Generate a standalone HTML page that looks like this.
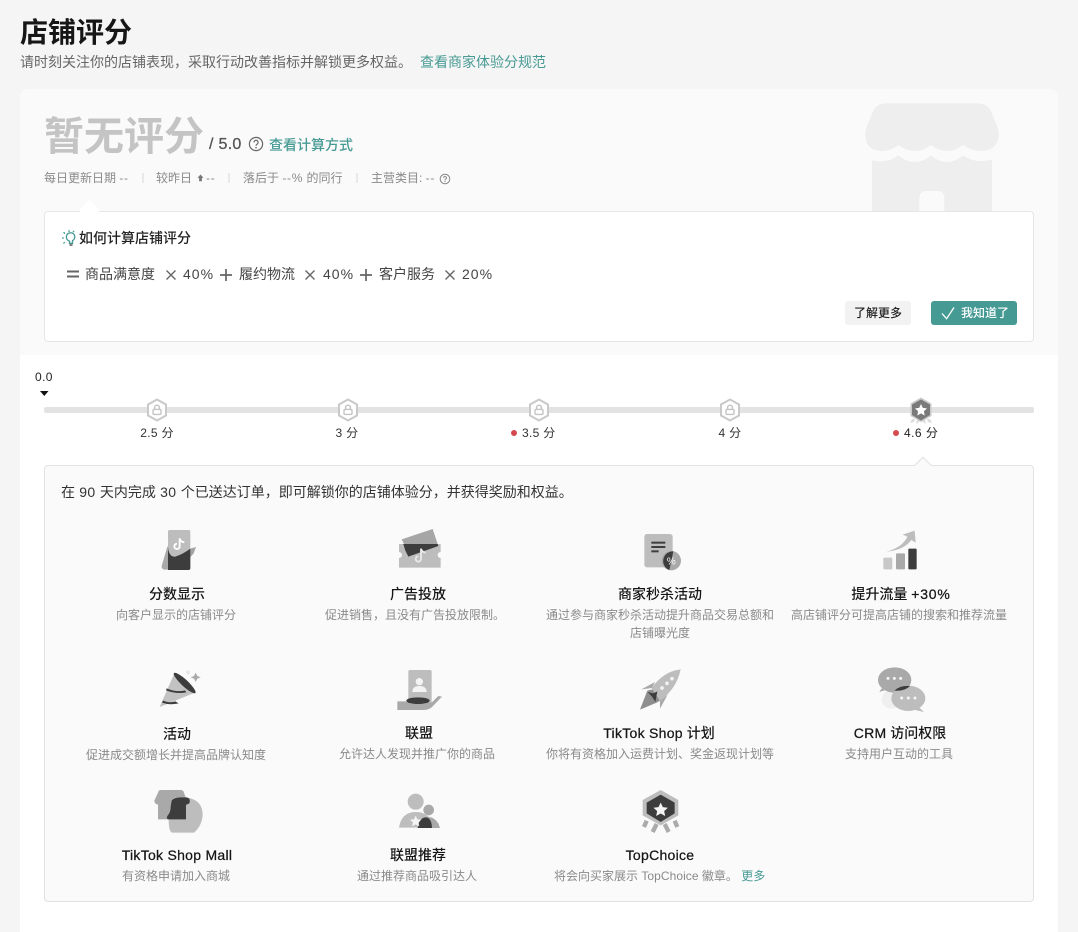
<!DOCTYPE html>
<html lang="zh-CN">
<head>
<meta charset="utf-8">
<title>店铺评分</title>
<style>
html,body{margin:0;padding:0;background:#f5f5f5;}
#p{position:relative;width:1078px;height:932px;overflow:hidden;background:#f5f5f5;font-family:"Liberation Sans","Noto Sans CJK SC",sans-serif;color:#222;}
.a{position:absolute;}
.t{position:absolute;white-space:nowrap;line-height:20px;height:20px;}
.c{width:280px;text-align:center;}
.h{font-size:14px;font-weight:500;color:#161616;}
.d{font-size:12px;color:#8a8a8a;}
.s{font-size:12px;color:#8a8a8a;}
.l{font-size:12px;color:#333;letter-spacing:.3px;}
.f{font-size:14px;color:#444;}
.g{color:#479a94;}
.n{letter-spacing:1px;}
.m{letter-spacing:.28px;-webkit-text-stroke:.25px #161616;}
.k{letter-spacing:.38px;}
.u{letter-spacing:.7px;}
svg{position:absolute;left:0;top:0;}
</style>
</head>
<body>
<div id="p">
<div class="a" style="left:20px;top:89px;width:1038px;height:843px;background:#fff;border-radius:8px 8px 0 0;"></div>
<div class="a" style="left:20px;top:89px;width:1038px;height:266px;background:#fafafa;border-radius:8px 8px 0 0;"></div>

<!-- store illustration -->
<svg width="1078" height="932" viewBox="0 0 1078 932">
<g transform="translate(700,90) scale(.33333)" fill="#eeeeee">
<path d="M555 40H835Q862 40 873 64L890 105Q896 118 896 132Q896 183 840 183Q815 183 790 165Q765 183 742 183Q716 183 693 165Q670 183 645 183Q620 183 595 165Q572 183 547 183Q496 183 496 132Q496 118 502 105L519 64Q530 40 555 40Z"/>
<path d="M516 211Q560 222 595 196Q620 216 645 216Q670 216 693 196Q716 216 742 216Q765 216 790 196Q825 222 876 209V365H516Z"/>
<path d="M658 365V325Q658 303 680 303H711Q733 303 733 325V365Z" fill="#fafafa"/>
</g>
</svg>

<div class="t" style="left:20px;top:14px;font-size:28px;line-height:38px;height:38px;font-weight:700;color:#161616;">店铺评分</div>
<div class="t" style="left:20px;top:52px;font-size:14px;color:#666;">请时刻关注你的店铺表现，采取行动改善指标并解锁更多权益。</div>
<div class="t g" style="left:420px;top:52px;font-size:14px;">查看商家体验分规范</div>

<div class="t" style="left:44px;top:113px;font-size:40px;line-height:48px;height:48px;font-weight:700;color:#c4c4c4;">暂无评分</div>
<div class="t" style="left:209px;top:135px;font-size:16px;color:#555;letter-spacing:.3px;-webkit-text-stroke:.3px #555;">/ 5.0</div>
<div class="t g" style="left:269px;top:135px;font-size:14px;font-weight:500;">查看计算方式</div>

<div class="t s" style="left:44px;top:168px;">每日更新日期 <span class="u">--</span></div>
<div class="t s" style="left:156px;top:168px;">较昨日</div>
<div class="t s" style="left:206px;top:168px;"><span class="u">--</span></div>
<div class="t s" style="left:243px;top:168px;">落后于 <span class="u">--%</span> 的同行</div>
<div class="t s" style="left:371px;top:168px;">主营类目: <span class="u">--</span></div>

<!-- how-to box -->
<div class="a" style="left:44px;top:211px;width:988px;height:129px;background:#fff;border:1px solid #e6e6e6;border-radius:4px;"></div>
<div class="a" style="left:82px;top:203px;width:15px;height:15px;background:#fff;transform:rotate(45deg);"></div>
<div class="a" style="left:45px;top:212px;width:986px;height:6px;background:#fff;border-radius:3px;"></div>

<div class="t" style="left:79px;top:228px;font-size:14px;font-weight:500;color:#222;">如何计算店铺评分</div>
<div class="t f" style="left:85px;top:264px;">商品满意度</div>
<div class="t f n" style="left:183px;top:264px;">40%</div>
<div class="t f" style="left:239px;top:264px;">履约物流</div>
<div class="t f n" style="left:323px;top:264px;">40%</div>
<div class="t f" style="left:379px;top:264px;">客户服务</div>
<div class="t f n" style="left:462px;top:264px;">20%</div>

<div class="a" style="left:845px;top:301px;width:66px;height:24px;background:#f2f2f2;border-radius:3px;"></div>
<div class="t" style="left:854px;top:303px;font-size:12px;font-weight:500;color:#222;">了解更多</div>
<div class="a" style="left:931px;top:301px;width:86px;height:24px;background:#459a94;border-radius:3px;"></div>
<div class="t" style="left:961px;top:303px;font-size:12px;font-weight:500;color:#fff;">我知道了</div>

<!-- progress -->
<div class="t" style="left:35px;top:367px;font-size:12px;color:#222;letter-spacing:.4px;">0.0</div>
<div class="a" style="left:44px;top:407px;width:990px;height:6px;background:#e3e3e3;border-radius:2px;"></div>
<div class="t l c" style="left:17px;top:423px;">2.5 分</div>
<div class="t l c" style="left:207px;top:423px;">3 分</div>
<div class="a" style="left:511px;top:430px;width:6px;height:6px;border-radius:50%;background:#d6484f;"></div>
<div class="t l" style="left:522px;top:423px;">3.5 分</div>
<div class="t l c" style="left:590px;top:423px;">4 分</div>
<div class="a" style="left:893px;top:430px;width:6px;height:6px;border-radius:50%;background:#d6484f;"></div>
<div class="t l" style="left:904px;top:423px;color:#222;letter-spacing:.45px;">4.6 分</div>

<!-- panel -->
<div class="a" style="left:44px;top:465px;width:988px;height:435px;background:#fafafa;border:1px solid #e2e2e2;border-radius:4px;"></div>
<div class="a" style="left:917px;top:459px;width:11px;height:11px;background:#fafafa;border-left:1px solid #e2e2e2;border-top:1px solid #e2e2e2;transform:rotate(45deg);"></div>
<div class="t" style="left:61px;top:482px;font-size:14px;color:#333;">在<span class="k"> 90 </span>天内完成<span class="k"> 30 </span>个已送达订单，即可解锁你的店铺体验分，并获得奖励和权益。</div>

<div class="t h c" style="left:37px;top:584px;">分数显示</div>
<div class="t d c" style="left:36px;top:605px;">向客户显示的店铺评分</div>
<div class="t h c" style="left:278px;top:584px;">广告投放</div>
<div class="t d c" style="left:275px;top:605px;">促进销售，且没有广告投放限制。</div>
<div class="t h c" style="left:520px;top:584px;">商家秒杀活动</div>
<div class="t d c" style="left:520px;top:605px;">通过参与商家秒杀活动提升商品交易总额和</div>
<div class="t d c" style="left:520px;top:623px;">店铺曝光度</div>
<div class="t h c" style="left:761px;top:584px;">提升流量 <span class="m" style="letter-spacing:.8px;">+30%</span></div>
<div class="t d c" style="left:759px;top:605px;">高店铺评分可提高店铺的搜索和推荐流量</div>

<div class="t h c" style="left:37px;top:724px;">活动</div>
<div class="t d c" style="left:36px;top:745px;">促进成交额增长并提高品牌认知度</div>
<div class="t h c" style="left:279px;top:723px;">联盟</div>
<div class="t d c" style="left:277px;top:744px;">允许达人发现并推广你的商品</div>
<div class="t h c" style="left:519px;top:723px;"><span class="m">TikTok Shop</span> 计划</div>
<div class="t d c" style="left:520px;top:744px;">你将有资格加入运费计划、奖金返现计划等</div>
<div class="t h c" style="left:760px;top:723px;"><span class="m">CRM</span> 访问权限</div>
<div class="t d c" style="left:759px;top:744px;">支持用户互动的工具</div>

<div class="t h c" style="left:37px;top:845px;"><span class="m">TikTok Shop Mall</span></div>
<div class="t d c" style="left:36px;top:866px;">有资格申请加入商城</div>
<div class="t h c" style="left:278px;top:845px;">联盟推荐</div>
<div class="t d c" style="left:277px;top:866px;">通过推荐商品吸引达人</div>
<div class="t h c" style="left:520px;top:845px;"><span class="m">TopChoice</span></div>
<div class="t d" style="left:554px;top:866px;">将会向买家展示 <span style="letter-spacing:.06px;">TopChoice</span> 徽章。 <span class="g">更多</span></div>

<svg width="1078" height="932" viewBox="0 0 1078 932">
<defs>
<g id="lock">
<path d="M0-10.500L9-5.500V5.500L0 10.500L-9 5.500V-5.500Z" fill="#fff" stroke="#c9c9c9" stroke-width="2"/>
<rect x="-4" y="-.6" width="8" height="5" rx="1.2" fill="none" stroke="#c4c4c4" stroke-width="1.4"/>
<path d="M-2.400-.6V-2.400A2.400 2.400 0 0 1 2.400-2.400V-.6" fill="none" stroke="#c4c4c4" stroke-width="1.4"/>
</g>
</defs>

<!-- help icons -->
<g fill="none" stroke="#666" stroke-width="1.2">
<circle cx="256" cy="144" r="6.600"/>
<path d="M253.900 142.400a2.100 2.100 0 1 1 3.200 1.800c-.8.5-1.100.9-1.100 1.600"/>
<circle cx="445" cy="179" r="4.800" stroke="#888" stroke-width="1"/>
<path d="M443.600 177.900a1.400 1.400 0 1 1 2.100 1.200c-.5.3-.7.6-.7 1.100" stroke="#888" stroke-width="1"/>
</g>
<circle cx="256" cy="147.700" r=".8" fill="#666"/>
<circle cx="445" cy="181.500" r=".6" fill="#888"/>

<!-- small up arrow -->
<path d="M200.500 174.500l3 3.400h-1.600v3.400h-2.800v-3.400h-1.600z" fill="#777"/>

<!-- separators -->
<g fill="#d8d8d8">
<rect x="142.500" y="173" width="1" height="10"/>
<rect x="228.500" y="173" width="1" height="10"/>
<rect x="356.500" y="173" width="1" height="10"/>
</g>

<!-- bulb -->
<g fill="none" stroke="#479a94" stroke-width="1.3">
<path d="M66.500 236a4.200 4.200 0 1 1 6 4.700v2.600h-3v-2.200a4.200 4.200 0 0 1-3-5.100z"/>
<path d="M69 232v-1.800M65 233.600l-1.500-1.300M63.800 238h-1.800M64.800 242.200l-1.400 1.200M74 230.800l-1 1.500"/>
<path d="M69.500 245h3" stroke="#3a3a3a"/>
</g>

<!-- formula signs -->
<g fill="none" stroke="#666" stroke-width="1.4">
<path d="M67 271.500h12M67 276.500h12" stroke-width="2"/>
<path d="M166.500 270.500l9 9M175.500 270.500l-9 9"/>
<path d="M220 275h12M226 269v12" stroke-width="1.7"/>
<path d="M305.500 270.500l9 9M314.500 270.500l-9 9"/>
<path d="M360 275h12M366 269v12" stroke-width="1.7"/>
<path d="M445.500 270.500l9 9M454.500 270.500l-9 9"/>
</g>

<!-- check -->
<path d="M942 313.500l4.600 5.200L954 307.500" fill="none" stroke="#fff" stroke-width="1.300"/>

<!-- marker -->
<path d="M40 391h8.500l-4.200 5z" fill="#111"/>

<!-- hex badges -->
<use href="#lock" x="157" y="410"/>
<use href="#lock" x="348" y="410"/>
<use href="#lock" x="539" y="410"/>
<use href="#lock" x="730" y="410"/>

<!-- star badge -->
<g>
<path d="M912 419l-2 4 4-1 1-3zM930 419l2 4-4-1-1-3zM917 420l-1 4 3-2 1-2zM925 420l1 4-3-2-1-2z" fill="#dcdcdc"/>
<path d="M921 397.500L931.500 403.500V416L921 422L910.500 416V403.500Z" fill="#c9c9c9"/>
<path d="M921 399.500L930 404.500V415L921 420.500L912 415V404.500Z" fill="#7a7a7a"/>
<path d="M921 404l1.800 3.900 4.200.5-3.100 2.900.8 4.200-3.700-2.100-3.700 2.100.8-4.200-3.100-2.900 4.200-.5z" fill="#fff"/>
</g>

<!-- icon 1 -->
<g transform="translate(130,520) scale(.33333)">
<path d="M112 80L95 138Q94 148 104 149H125V80Z" fill="#a9a9a9"/>
<path d="M178 87L198 81L191 100L178 115Z" fill="#a3a3a3"/>
<rect x="114" y="30" width="67" height="120" rx="5" fill="#bdbdbd"/>
<path d="M114 80Q116 112 136 110Q160 102 181 86V144Q181 150 175 150H114Z" fill="#3d3d3d"/>
<path d="M149 55V79a8 8 0 1 1-8-8M149 55q2 11 14 12" fill="none" stroke="#fff" stroke-width="5.500"/>
</g>

<!-- icon 2 -->
<g transform="translate(130,520) scale(.33333)">
<path d="M807 72H932V96a9 9 0 0 0 0 18V143H807V114a9 9 0 0 0 0-18Z" fill="#bdbdbd"/>
<path d="M815 58L908 27L923 72H822Z" fill="#a6a6a6"/>
<path d="M820 72H923L925 78L835 110L826 92Z" fill="#3d3d3d"/>
<path d="M873 86V117a8 8 0 1 1-8-8M873 86q2 10 14 12" fill="none" stroke="#e9e9e9" stroke-width="5.500"/>
</g>

<!-- icon 3 -->
<g transform="translate(610,520) scale(.33333)">
<rect x="103" y="42" width="85" height="100" rx="8" fill="#bdbdbd"/>
<rect x="124" y="65" width="42" height="6" fill="#3d3d3d"/>
<rect x="124" y="78" width="42" height="6" fill="#3d3d3d"/>
<rect x="124" y="91" width="22" height="6" fill="#3d3d3d"/>
<circle cx="184" cy="122" r="29" fill="#a9a9a9"/>
<path d="M190 94A29 29 0 0 0 178 150Z" fill="#3d3d3d"/>
<text x="184" y="133" text-anchor="middle" font-size="30" fill="#fff" font-family="Liberation Sans,sans-serif">%</text>
</g>

<!-- icon 4 -->
<g transform="translate(610,520) scale(.33333)">
<rect x="820" y="113" width="27" height="35" rx="3" fill="#c8c8c8"/>
<rect x="858" y="100" width="27" height="48" rx="3" fill="#a9a9a9"/>
<rect x="895" y="86" width="25" height="62" rx="3" fill="#3d3d3d"/>
<path d="M830 95Q878 82 892 50L878 44L914 32L917 68L904 60Q882 90 830 95Z" fill="#bdbdbd"/>
</g>

<!-- icon 5 -->
<g transform="translate(130,660) scale(.33333)">
<path d="M89 141L133 40L195 98Z" fill="#c2c2c2"/>
<ellipse cx="164" cy="69" rx="44" ry="10" transform="rotate(43 164 69)" fill="#3d3d3d"/>
<path d="M110 85Q140 98 165 91L169 97Q140 103 108 91Z" fill="#3d3d3d"/>
<path d="M99 122Q118 130 136 124L146 130Q118 136 96 128Z" fill="#3d3d3d"/>
<path d="M197 38l5 10 10 4-10 4-5 10-5-10-10-4 10-4z" fill="#aaa"/>
<circle cx="174" cy="37" r="6" fill="#e6e6e6"/>
</g>

<!-- icon 6 -->
<g transform="translate(130,660) scale(.33333)">
<rect x="835" y="30" width="70" height="110" rx="5" fill="#bdbdbd"/>
<circle cx="868" cy="65" r="11" fill="#f4f4f4"/>
<path d="M847 96Q847 78 868 78Q890 78 890 96Z" fill="#f4f4f4"/>
<path d="M802 124H835L905 128L925 108L936 110L905 142Q895 150 880 150H802Z" fill="#a9a9a9"/>
<ellipse cx="864" cy="122" rx="35" ry="10" fill="#3d3d3d"/>
</g>

<!-- icon 7 -->
<g transform="translate(610,660) scale(.33333)">
<path d="M126 84L94 88L135 66Z" fill="#a9a9a9"/>
<path d="M150 122L150 146L173 104Z" fill="#a9a9a9"/>
<path d="M90 149L112 92L128 88L150 122L140 128Z" fill="#8e8e8e"/>
<path d="M212 28Q160 34 125 84L150 122Q200 86 212 28Z" fill="#bdbdbd"/>
<path d="M113 96L130 100L142 94L136 126L126 110Z" fill="#3d3d3d"/>
<circle cx="186" cy="56" r="5.500" fill="#f2f2f2"/>
<circle cx="171" cy="70" r="5.500" fill="#f2f2f2"/>
<circle cx="156" cy="84" r="5.500" fill="#f2f2f2"/>
</g>

<!-- icon 8 -->
<g transform="translate(610,660) scale(.33333)">
<circle cx="843" cy="118" r="28" fill="#efefef"/>
<path d="M815 85L808 96L826 90Z" fill="#a9a9a9"/>
<ellipse cx="854" cy="60" rx="50" ry="38" fill="#a9a9a9"/>
<path d="M925 140L942 156L915 150Z" fill="#bdbdbd"/>
<ellipse cx="895" cy="115" rx="51" ry="38" fill="#bdbdbd"/>
<path d="M853 92Q870 76 900 78Q885 94 853 92Z" fill="#3d3d3d"/>
<g fill="#f5f5f5">
<circle cx="834" cy="55" r="4.500"/><circle cx="853" cy="55" r="4.500"/><circle cx="872" cy="55" r="4.500"/>
<circle cx="875" cy="114" r="4.500"/><circle cx="895" cy="114" r="4.500"/><circle cx="915" cy="114" r="4.500"/>
</g>
</g>

<!-- icon 9 -->
<g transform="translate(130,780) scale(.33333)">
<path d="M92 30H152Q160 30 162 38L170 62Q170 72 165 72V118H84V74Q73 72 73 62L84 38Q86 30 92 30Z" fill="#a9a9a9"/>
<path d="M135 52Q215 46 218 100Q218 135 192 158H128Q116 158 116 118L125 60Z" fill="#bdbdbd"/>
<path d="M125 62Q132 52 150 52H170Q182 54 179 68Q175 74 168 74V118H116Q108 118 112 108Q122 98 122 80Z" fill="#3d3d3d"/>
</g>

<!-- icon 10 -->
<g transform="translate(130,780) scale(.33333)">
<circle cx="857" cy="65" r="24" fill="#bdbdbd"/>
<path d="M807 143Q814 96 857 96Q885 96 900 115L880 143Z" fill="#bdbdbd"/>
<circle cx="896" cy="90" r="16" fill="#a9a9a9"/>
<path d="M880 118Q905 100 925 130L930 144H905Z" fill="#a9a9a9"/>
<path d="M863 144Q868 112 888 112Q905 114 906 144Z" fill="#3d3d3d"/>
<path d="M857 107l5 11 12 1-9 8 3 12-11-6-11 6 3-12-9-8 12-1z" fill="#f4f4f4"/>
</g>

<!-- icon 11 -->
<g transform="translate(540,780) scale(.33333)">
<g fill="none" stroke="#ababab" stroke-width="13">
<path d="M320 122L312 141M350 132L338 156M374 132L386 156M404 122L412 141"/>
</g>
<path d="M362 30L415 60V106L362 136L308 106V60Z" fill="#bdbdbd"/>
<path d="M362 44L404 68V100L362 126L320 100V68Z" fill="#3d3d3d"/>
<path d="M362 68l6.500 13.500 15 1.800-11 10 3 14.700-13.500-7.500-13.500 7.500 3-14.700-11-10 15-1.800z" fill="#f4f4f4"/>
</g>
</svg>
</div>
</body>
</html>
